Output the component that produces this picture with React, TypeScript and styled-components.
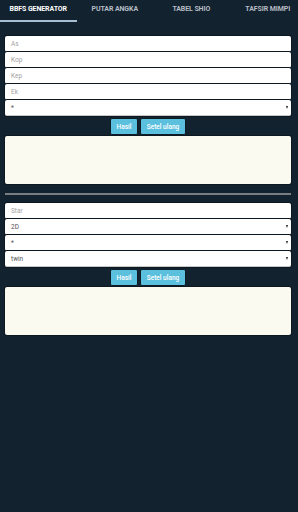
import React from 'react';
import styled, { createGlobalStyle } from 'styled-components';

const GlobalStyle = createGlobalStyle`
  html, body {
    margin: 0;
    padding: 0;
    background: #13222f;
    font-family: 'Roboto', 'Liberation Sans', sans-serif;
  }
`;

const Page = styled.div`
  width: 298px;
  min-height: 512px;
  background: #13222f;
  overflow: hidden;
`;

const TabBar = styled.div`
  display: flex;
  height: 22px;
  width: 306px;
`;

const Tab = styled.div<{ active?: boolean }>`
  flex: 0 0 76.5px;
  display: flex;
  align-items: center;
  justify-content: center;
  box-sizing: border-box;
  padding-bottom: 2px;
  font-size: 7px;
  font-weight: 700;
  letter-spacing: -0.1px;
  color: ${p => (p.active ? '#ffffff' : '#b4bcc4')};
  border-bottom: 2px solid ${p => (p.active ? '#a8bfd3' : 'transparent')};
`;

const Content = styled.div`
  padding: 14px 7px 0 5px;
  display: flex;
  flex-direction: column;
`;

const Form = styled.div`
  display: flex;
  flex-direction: column;
`;

const Field = styled.div`
  height: 16px;
  box-sizing: border-box;
  background: #ffffff;
  border-radius: 2px;
  border-bottom: 1px solid #c8c8c8;
  box-shadow: 0 0 0 1px #0c1720;
  display: flex;
  align-items: center;
  justify-content: space-between;
  padding: 0 3px 0 6px;
  font-size: 6.5px;
`;

const Placeholder = styled.span`
  color: #a2a2a2;
`;

const Value = styled.span`
  color: #555555;
`;

const Arrow = styled.span`
  width: 0;
  height: 0;
  border-left: 1.5px solid transparent;
  border-right: 1.5px solid transparent;
  border-top: 3px solid #222;
`;

const ButtonRow = styled.div`
  display: flex;
  justify-content: center;
  gap: 2px;
  margin: 2px 0 1px;
`;

const Button = styled.div<{ w: number }>`
  width: ${p => p.w}px;
  height: 17px;
  box-sizing: border-box;
  background: #5bc0de;
  border: 1px solid #0f1c26;
  border-radius: 2px;
  color: #ffffff;
  font-size: 6.5px;
  font-weight: 500;
  display: flex;
  align-items: center;
  justify-content: center;
`;

const Output = styled.div`
  height: 48px;
  background: #fbfaf1;
  border-radius: 2px;
  box-shadow: 0 0 0 1px #0c1720;
`;

const Divider = styled.div`
  height: 2px;
  background: #777d82;
  margin: 9px 0 8px;
`;

type Row = { text: string; placeholder?: boolean; select?: boolean };

const Section: React.FC<{ rows: Row[] }> = ({ rows }) => (
  <Form>
    {rows.map((r, i) => (
      <Field key={i}>
        {r.placeholder ? <Placeholder>{r.text}</Placeholder> : <Value>{r.text}</Value>}
        {r.select && <Arrow />}
      </Field>
    ))}
    <ButtonRow>
      <Button w={28}>Hasil</Button>
      <Button w={46}>Setel ulang</Button>
    </ButtonRow>
    <Output />
  </Form>
);

export default function App() {
  return (
    <Page>
      <GlobalStyle />
      <TabBar>
        <Tab active>BBFS GENERATOR</Tab>
        <Tab>PUTAR ANGKA</Tab>
        <Tab>TABEL SHIO</Tab>
        <Tab>TAFSIR MIMPI</Tab>
      </TabBar>
      <Content>
        <Section
          rows={[
            { text: 'As', placeholder: true },
            { text: 'Kop', placeholder: true },
            { text: 'Kep', placeholder: true },
            { text: 'Ek', placeholder: true },
            { text: '*', select: true },
          ]}
        />
        <Divider />
        <Section
          rows={[
            { text: 'Star', placeholder: true },
            { text: '2D', select: true },
            { text: '*', select: true },
            { text: 'twin', select: true },
          ]}
        />
      </Content>
    </Page>
  );
}
